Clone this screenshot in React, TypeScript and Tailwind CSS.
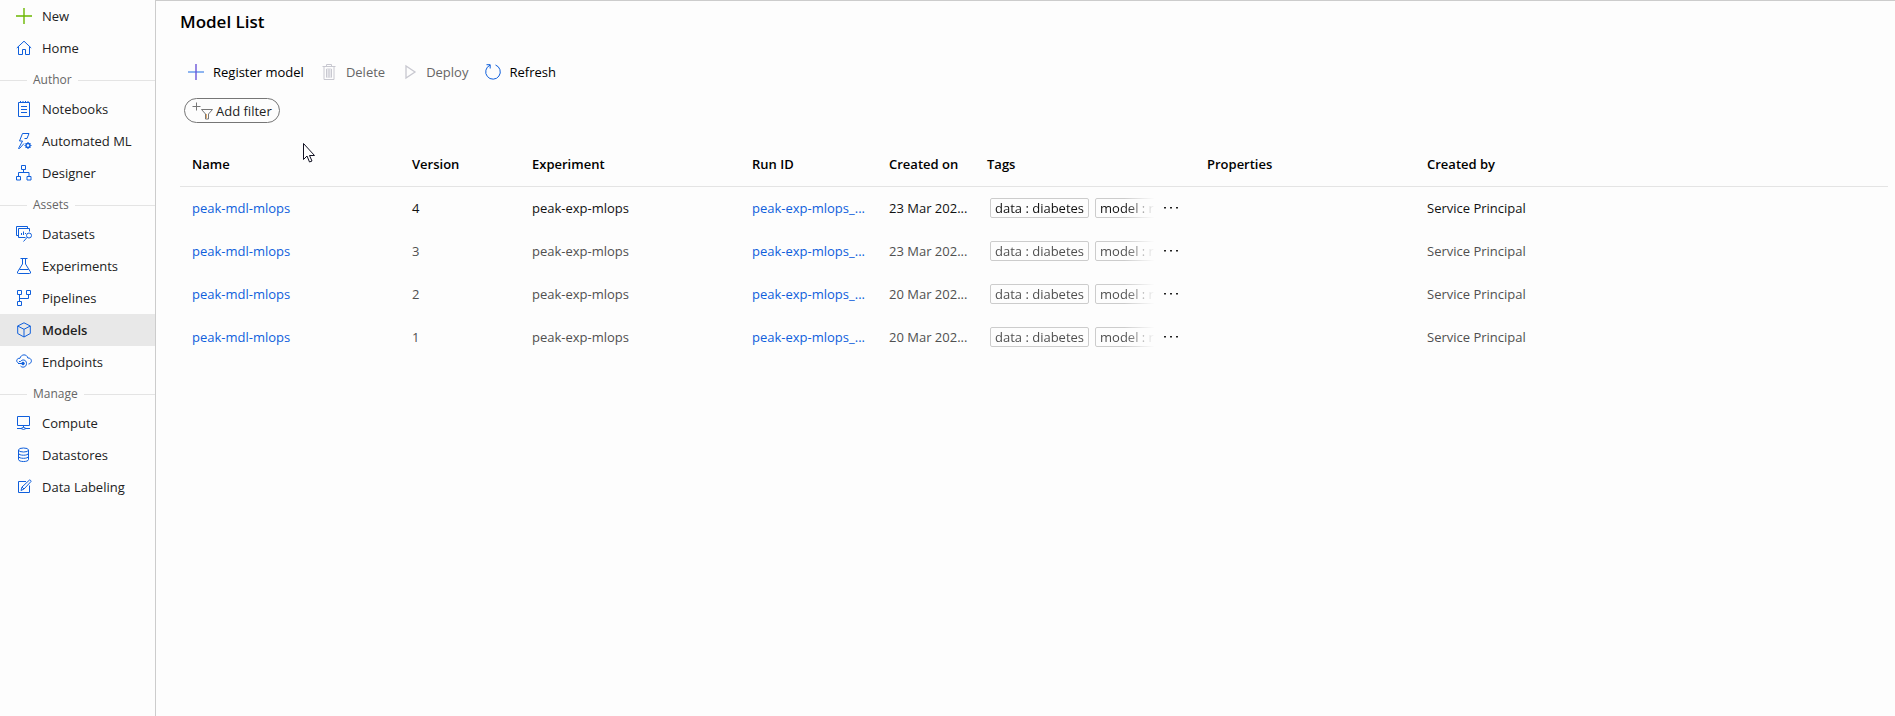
import React from "react";

type IconProps = { className?: string };

const svgBase = {
  viewBox: "0 0 16 16",
  fill: "none",
  stroke: "currentColor",
  strokeWidth: 1,
  "aria-hidden": true,
} as const;

const icon = (children: React.ReactNode) =>
  function Icon({ className = "size-4" }: IconProps) {
    return (
      <svg {...svgBase} className={className}>
        {children}
      </svg>
    );
  };

const PlusIcon = icon(<path d="M8 0v16M0 8h16" strokeWidth="1.4" />);
const HomeIcon = icon(<path d="M.8 8 8 1.2 15.2 8M2.5 6.500v8h4v-5h3v5h4v-8" />);
const NotebookIcon = icon(
  <path d="M2.5 1.500h11v14h-11zM4.500 0v2M7 0v2M9.500 0v2M12 0v2M5 5.500h6M5 8.500h6M5 11.500h6" />,
);
const AutoMlIcon = icon(
  <>
    <path d="M8.500 5.500h2.500L13 .5H6.500L3.500 8h3L2.500 15.500h1L8 10.500" />
    <circle cx="12" cy="12.500" r="2" strokeWidth="1.400" />
    <path d="M12 9v1.200M12 14.800V16M8.500 12.500h1.200M14.300 12.500h1.200M9.500 10l1 1M13.500 14l1 1M14.500 10l-1 1M10.500 14l-1 1" />
  </>,
);
const DesignerIcon = icon(
  <path d="M5.500.5h4v4h-4zM.5 11.500h4v3.500h-4zM11 11.500h4v3.500h-4zM7.500 4.500v3M2.500 11.500v-4h10.500v4" />,
);
const DatasetsIcon = icon(
  <>
    <path d="M2.500 9.500H.5v-9h11v2" />
    <path d="M9.500 11.500h-7v-9h11v3M5.500 9V7M7.500 9V5.500M9.500 8V7" />
    <circle cx="13" cy="9.500" r="2.500" />
    <path d="M11.200 11.300 7.500 15.500" />
  </>,
);
const FlaskIcon = icon(<path d="M4.500.5h7M6.500.5V6L1.500 14q-.5 1.500 1 1.500h11q1.500 0 1-1.500L9.500 6V.5M3.500 11.500h9" />);
const PipelinesIcon = icon(
  <path d="M1.500.5h4v4h-4zM10.500.5h4v4h-4zM1.500 11.500h4v4h-4zM3.500 4.500v7M3.500 8.500h9v-4" />,
);
const CubeIcon = icon(<path d="M8 .8 14.300 4v7.500L8 15 1.700 11.500V4zM1.700 4 8 7.300 14.300 4M8 7.300V15" />);
const EndpointsIcon = icon(
  <>
    <path d="M2.500 9C-.5 8 .5 3.800 4 4.300 5-.2 11-.2 11.800 4c4.500-.3 4.800 5.500.7 6" />
    <path d="M3 7.500h1.500C6 5 10.500 5.500 10.500 9.500c0 4-4.500 4.500-6 2.500" />
    <path d="M2 9.500h4" />
    <circle cx="7" cy="9.500" r="1.300" fill="currentColor" />
  </>,
);
const ComputeIcon = icon(<path d="M1.500 1.500h12v9h-12zM7.500 10.500v2M1 13.500h4M10 13.500h4M5 13.500q2.500-2.500 5 0-2.500 2-5 0z" />);
const DatastoresIcon = icon(
  <>
    <ellipse cx="7.500" cy="3" rx="5" ry="2" />
    <path d="M2.500 3v9.500c0 2.700 10 2.700 10 0V3M2.500 6.200c0 2.700 10 2.700 10 0M2.500 9.300c0 2.700 10 2.700 10 0" />
  </>,
);
const LabelingIcon = icon(
  <path d="M10 2.500H2.500v11h11V6.500M5 11.500l1-3.500 7.500-7q1.500 0 1.500 1.500l-7 7.500zM6 8l2 2" />,
);
const TrashIcon = icon(
  <>
    <path d="M5.500 4h5v10h-5z" fill="#e8e8ec" stroke="none" />
    <path d="M1.500 2.500h13M5.500 2.500v-2h5v2M3 2.500v13h10v-13M5.500 5v8.500M8 5v8.500M10.500 5v8.500" />
  </>,
);
const PlayIcon = icon(<path d="M4 2v12L13 8z" strokeWidth="1.300" />);
const RefreshIcon = icon(<path d="M10.500 1a7.300 7.300 0 1 1-5.500.2M1.500.7H5.200V4.500" />);

type Item = { label: string; Icon: React.ComponentType<IconProps>; active?: boolean; green?: boolean };
const sections: { title?: string; items: Item[] }[] = [
  {
    items: [
      { label: "New", Icon: PlusIcon, green: true },
      { label: "Home", Icon: HomeIcon },
    ],
  },
  {
    title: "Author",
    items: [
      { label: "Notebooks", Icon: NotebookIcon },
      { label: "Automated ML", Icon: AutoMlIcon },
      { label: "Designer", Icon: DesignerIcon },
    ],
  },
  {
    title: "Assets",
    items: [
      { label: "Datasets", Icon: DatasetsIcon },
      { label: "Experiments", Icon: FlaskIcon },
      { label: "Pipelines", Icon: PipelinesIcon },
      { label: "Models", Icon: CubeIcon, active: true },
      { label: "Endpoints", Icon: EndpointsIcon },
    ],
  },
  {
    title: "Manage",
    items: [
      { label: "Compute", Icon: ComputeIcon },
      { label: "Datastores", Icon: DatastoresIcon },
      { label: "Data Labeling", Icon: LabelingIcon },
    ],
  },
];

function Sidebar() {
  return (
    <nav aria-label="Workspace" className="w-39 shrink-0 border-r border-[#cccccc]">
      {sections.map((section, i) => (
        <div key={i}>
          {section.title && (
            <div className="flex h-[29px] items-center gap-1.5 pt-[3px] text-xs text-[#666666]">
              <span className="h-px w-[27px] bg-[#e4e4e4]" />
              <h2>{section.title}</h2>
              <span className="h-px flex-1 bg-[#e4e4e4]" />
            </div>
          )}
          <ul>
            {section.items.map(({ label, Icon, active, green }) => (
              <li key={label}>
                <a
                  href="#"
                  aria-current={active ? "page" : undefined}
                  className={`flex h-8 items-center gap-2.5 pl-4 ${active ? "bg-[#e8e8e8] font-semibold" : ""}`}
                >
                  <Icon className={`size-4 shrink-0 ${green ? "text-[#6bb700]" : "text-[#0f5fdc]"}`} />
                  <span className="whitespace-nowrap">{label}</span>
                </a>
              </li>
            ))}
          </ul>
        </div>
      ))}
    </nav>
  );
}

function Toolbar() {
  return (
    <div role="toolbar" aria-label="Model actions" className="mt-[22px] flex h-8 items-center gap-[17px] pl-2">
      <button className="flex items-center gap-[9px] text-black">
        <svg {...svgBase} className="size-4">
          <path d="M0 8h16" stroke="#5c94ea" strokeWidth="1.4" />
          <path d="M8 0v16" stroke="#6a55d8" strokeWidth="1.4" />
        </svg>
        Register model
      </button>
      <button disabled className="flex items-center gap-[9px] text-[#666666]">
        <TrashIcon className="size-4 text-[#c8c8d0]" />
        Delete
      </button>
      <button disabled className="flex items-center gap-2 text-[#666666]">
        <PlayIcon className="size-4 text-[#c8c8d0]" />
        Deploy
      </button>
      <button className="flex items-center gap-2 text-black">
        <RefreshIcon className="size-4 text-[#0f5fdc]" />
        Refresh
      </button>
    </div>
  );
}

const rows = [
  { version: 4, created: "23 Mar 202..." },
  { version: 3, created: "23 Mar 202..." },
  { version: 2, created: "20 Mar 202..." },
  { version: 1, created: "20 Mar 202..." },
];

const columns = [
  { label: "Name", width: "w-55" },
  { label: "Version", width: "w-30" },
  { label: "Experiment", width: "w-55" },
  { label: "Run ID", width: "w-[137px]" },
  { label: "Created on", width: "w-[98px]" },
  { label: "Tags", width: "w-55" },
  { label: "Properties", width: "w-55" },
  { label: "Created by", width: "" },
];

function Tag({ children }: { children: React.ReactNode }) {
  return (
    <span className="shrink-0 rounded-xs border border-[#cccccc] px-1 leading-[18px]">{children}</span>
  );
}

function ModelTable() {
  return (
    <table className="mt-[19px] w-full table-fixed border-collapse text-left">
      <thead>
        <tr className="h-11 border-b border-[#e4e4e4] text-black">
          {columns.map((c) => (
            <th key={c.label} scope="col" className={`${c.width} pl-3 font-semibold whitespace-nowrap`}>
              {c.label}
            </th>
          ))}
        </tr>
      </thead>
      <tbody>
        {rows.map((row, i) => (
          <tr key={row.version} className={`h-[43px] ${i === 0 ? "text-[#111111]" : "text-[#505050]"}`}>
            <td className="pl-3">
              <a href="#" className="text-[#0f5fdc]">peak-mdl-mlops</a>
            </td>
            <td className="pl-3">{row.version}</td>
            <td className="pl-3">peak-exp-mlops</td>
            <td className="pl-3 whitespace-nowrap">
              <a href="#" className="text-[#0f5fdc]">peak-exp-mlops_...</a>
            </td>
            <td className="pl-3 whitespace-nowrap">{row.created}</td>
            <td className="pl-[15px]">
              <div className="flex items-center gap-1">
                <div className="flex w-42 gap-1.5 overflow-hidden mask-r-from-80% mask-r-to-98%">
                  <Tag>data : diabetes</Tag>
                  <Tag>model : ridge</Tag>
                </div>
                <button aria-label="Show all tags" className="text-[#222222]">
                  <svg viewBox="0 0 18 4" fill="currentColor" className="h-1 w-[18px]" aria-hidden="true">
                    <path d="M2 1h2v1.500H2zM8 1h2v1.500H8zM14 1h2v1.500h-2z" />
                  </svg>
                </button>
              </div>
            </td>
            <td />
            <td className="pl-3">Service Principal</td>
          </tr>
        ))}
      </tbody>
    </table>
  );
}

export default function App() {
  return (
    <div className="flex min-h-screen bg-[#fdfdfd] font-['Open_Sans',sans-serif] text-[13px] leading-5 text-[#222222]">
      <Sidebar />
      <main className="relative min-w-0 flex-1 border-t border-[#cccccc] pr-[7px] pl-6">
        <h1 className="pt-[9px] text-[17px] leading-6 font-semibold text-black">Model List</h1>
        <Toolbar />
        <button className="mt-2.5 ml-1 flex h-[25px] items-center gap-[3px] rounded-full border border-[#767676] px-[7px] text-[#222222]">
          <svg viewBox="0 0 21 18" fill="none" className="h-[18px] w-[21px]" aria-hidden="true">
            <path d="M4.500.5v8M.5 4.500h8" stroke="#777777" />
            <path d="M9.500 7.500h11L16.500 12v5h-3v-5z" stroke="#777777" />
            <path d="M14.500 12v4.500" stroke="#e0a868" />
          </svg>
          Add filter
        </button>
        <ModelTable />
        <svg viewBox="0 0 12 20" className="absolute top-[142px] left-[147px] h-5 w-3" aria-hidden="true">
          <path d="M.5.5v16l3.500-3.500 2.500 6 2.500-1-2.500-5.500h5z" fill="#fff" stroke="#111122" />
        </svg>
      </main>
    </div>
  );
}
